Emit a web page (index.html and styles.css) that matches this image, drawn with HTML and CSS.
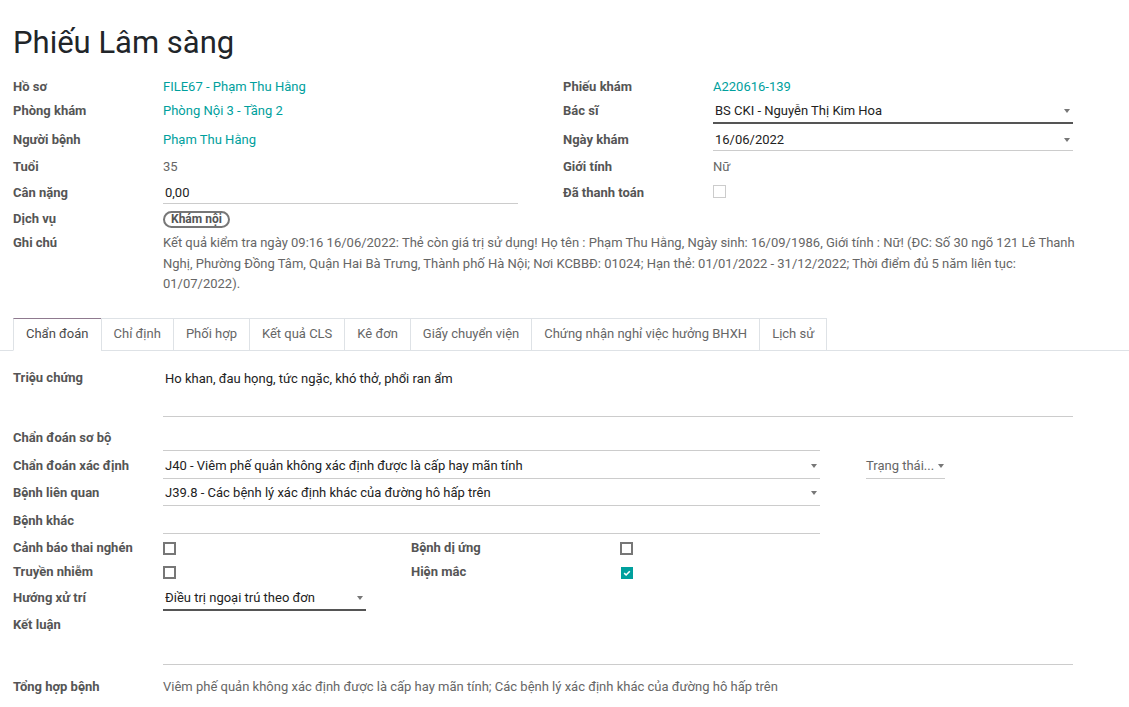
FILE: index.html
```html
<!DOCTYPE html>
<html lang="vi">
<head>
<meta charset="utf-8">
<title>Phiếu Lâm sàng</title>
<link rel="stylesheet" href="styles.css">
</head>
<body>
<div class="sheet">
  <h1 class="title">Phiếu Lâm sàng</h1>
  <div class="head-grid">
    <div class="lbl">Hồ sơ</div>
    <div class="val-l"><a class="link">FILE67 - Phạm Thu Hằng</a></div>
    <div class="lbl">Phiếu khám</div>
    <div class="val-r"><a class="link">A220616-139</a></div>

    <div class="lbl">Phòng khám</div>
    <div class="val-l"><a class="link">Phòng Nội 3 - Tầng 2</a></div>
    <div class="lbl">Bác sĩ</div>
    <div class="val-r"><div class="input focus"><span class="in-text">BS CKI - Nguyễn Thị Kim Hoa</span><span class="caret"></span></div></div>

    <div class="lbl">Người bệnh</div>
    <div class="val-l"><a class="link">Phạm Thu Hằng</a></div>
    <div class="lbl">Ngày khám</div>
    <div class="val-r"><div class="input"><span class="in-text">16/06/2022</span><span class="caret"></span></div></div>

    <div class="lbl">Tuổi</div>
    <div class="val-l plain">35</div>
    <div class="lbl">Giới tính</div>
    <div class="val-r plain">Nữ</div>

    <div class="lbl">Cân nặng</div>
    <div class="val-l"><div class="input"><span class="in-text">0,00</span></div></div>
    <div class="lbl">Đã thanh toán</div>
    <div class="val-r"><span class="cb cb-ro"></span></div>

    <div class="lbl">Dịch vụ</div>
    <div class="val-l"><span class="badge">Khám nội</span></div>
  </div>
  <div class="note-row">
    <div class="lbl">Ghi chú</div>
    <div class="plain note">Kết quả kiểm tra ngày 09:16 16/06/2022: Thẻ còn giá trị sử dụng! Họ tên : Phạm Thu Hằng, Ngày sinh: 16/09/1986, Giới tính : Nữ! (ĐC: Số 30 ngõ 121 Lê Thanh Nghị, Phường Đồng Tâm, Quận Hai Bà Trưng, Thành phố Hà Nội; Nơi KCBBĐ: 01024; Hạn thẻ: 01/01/2022 - 31/12/2022; Thời điểm đủ 5 năm liên tục: 01/07/2022).</div>
  </div>
</div>

<div class="notebook">
  <ul class="tabs">
    <li class="tab active">Chẩn đoán</li>
    <li class="tab">Chỉ định</li>
    <li class="tab">Phối hợp</li>
    <li class="tab">Kết quả CLS</li>
    <li class="tab">Kê đơn</li>
    <li class="tab">Giấy chuyển viện</li>
    <li class="tab">Chứng nhận nghỉ việc hưởng BHXH</li>
    <li class="tab">Lịch sử</li>
  </ul>
  <div class="tab-body">
    <div class="frow frow-area">
      <div class="lbl">Triệu chứng</div>
      <div class="textarea">Ho khan, đau họng, tức ngặc, khó thở, phổi ran ẩm</div>
    </div>
    <div class="frow frow-mid">
      <div class="lbl">Chẩn đoán sơ bộ</div>
      <div class="input input-line"><span class="in-text"></span></div>
    </div>
    <div class="frow frow-mid frow-status">
      <div class="lbl">Chẩn đoán xác định</div>
      <div class="input input-line"><span class="in-text">J40 - Viêm phế quản không xác định được là cấp hay mãn tính</span><span class="caret"></span></div>
      <div class="status"><span class="status-text">Trạng thái...</span><span class="caret caret-sm"></span></div>
    </div>
    <div class="frow frow-mid">
      <div class="lbl">Bệnh liên quan</div>
      <div class="input input-line"><span class="in-text">J39.8 - Các bệnh lý xác định khác của đường hô hấp trên</span><span class="caret"></span></div>
    </div>
    <div class="frow frow-mid">
      <div class="lbl">Bệnh khác</div>
      <div class="input input-line"><span class="in-text"></span></div>
    </div>
    <div class="cb-grid">
      <div class="lbl">Cảnh báo thai nghén</div>
      <div class="cb-cell"><span class="cb"></span></div>
      <div class="lbl">Bệnh dị ứng</div>
      <div class="cb-cell"><span class="cb"></span></div>
      <div class="lbl">Truyền nhiễm</div>
      <div class="cb-cell"><span class="cb"></span></div>
      <div class="lbl">Hiện mắc</div>
      <div class="cb-cell"><span class="cb cb-on"><svg viewBox="0 0 12 12" width="12" height="12"><path d="M3.2 6.2 L5.1 8 L8.8 4.2" fill="none" stroke="#fff" stroke-width="1.6"/></svg></span></div>
    </div>
    <div class="frow frow-short">
      <div class="lbl">Hướng xử trí</div>
      <div class="input focus input-sel"><span class="in-text">Điều trị ngoại trú theo đơn</span><span class="caret"></span></div>
    </div>
    <div class="frow frow-area frow-end">
      <div class="lbl">Kết luận</div>
      <div class="textarea textarea-tall"></div>
    </div>
    <div class="frow">
      <div class="lbl">Tổng hợp bệnh</div>
      <div class="plain">Viêm phế quản không xác định được là cấp hay mãn tính; Các bệnh lý xác định khác của đường hô hấp trên</div>
    </div>
  </div>
</div>
</body>
</html>
```

FILE: styles.css
```css
* { box-sizing: border-box; }
html, body { margin: 0; padding: 0; background: #fff; }
body {
  font-family: Roboto, "Noto Sans", "Liberation Sans", sans-serif;
  font-size: 13px;
  line-height: 20px;
  color: #4c4c4c;
}
.sheet { padding: 0 13px; }
.title {
  margin: 0;
  padding-top: 25px;
  font-size: 31px;
  line-height: 36px;
  font-weight: 400;
  color: #212529;
}
.head-grid {
  display: grid;
  grid-template-columns: 150px 400px 150px 360px;
  grid-template-rows: 24px 29px 27px 26px 26px 24px;
  margin-top: 16px;
}
.lbl { font-weight: 700; color: #555; white-space: nowrap; }
.val-l { padding-right: 45px; }
.link { color: #00a09d; text-decoration: none; }
.plain { color: #666; }

.input {
  display: flex;
  align-items: center;
  min-height: 21px;
  padding: 0 2px;
  border-bottom: 1px solid #ccc;
  color: #222;
}
.input.focus { border-bottom: 2px solid #555; padding-bottom: 1px; }
.in-text { flex: 1; min-width: 0; white-space: nowrap; overflow: hidden; }
.caret {
  width: 0; height: 0;
  border-left: 3.5px solid transparent;
  border-right: 3.5px solid transparent;
  border-top: 4px solid #777;
  margin-left: 6px;
  margin-right: 1px;
}

.cb {
  display: inline-block;
  width: 13px; height: 13px;
  border: 2px solid #777;
  background: #fff;
  vertical-align: top;
  margin-top: 4px;
}
.cb-ro { border: 1px solid #ccc; margin-top: 2px; }
.cb-on {
  width: 12px; height: 12px;
  border: none;
  background: #00a09d;
  margin-left: 1px;
  margin-top: 5px;
}
.cb-on svg { display: block; }

.badge {
  display: inline-block;
  padding: 0 6px;
  border: 2px solid #777;
  border-radius: 10px;
  font-size: 12px;
  font-weight: 700;
  line-height: 13px;
  color: #555;
}

.note-row {
  display: grid;
  grid-template-columns: 150px 916px;
}
.note { line-height: 20.5px; }

.notebook { margin-top: 23.5px; }
.tabs {
  display: flex;
  list-style: none;
  margin: 0;
  padding: 0 0 0 13px;
  border-bottom: 1px solid #dee2e6;
}
.tab {
  padding: 5px 12px 6px;
  border: 1px solid #dee2e6;
  margin-bottom: -1px;
  margin-left: -1px;
  color: #666;
  white-space: nowrap;
}
.tab:first-child { margin-left: 0; }
.tab.active {
  color: #4c4c4c;
  border-top-color: #8f7a8f;
  border-bottom-color: #fff;
}

.tab-body { padding: 17px 13px 0; }
.frow {
  display: grid;
  grid-template-columns: 150px 910px;
  margin-bottom: 4.5px;
}
.frow-mid { grid-template-columns: 150px 657px; margin-bottom: 4.5px; }
.frow-status { grid-template-columns: 150px 657px 125px; }
.frow-status .status { margin-left: 46px; }
.frow-short { grid-template-columns: 150px 203px; margin-bottom: 4px; }
.frow-area { margin-bottom: 11px; }
.frow-end { margin-bottom: 12px; }
.input-line { height: 23px; padding-bottom: 2px; }
.textarea {
  height: 49px;
  padding: 1px 2px 0;
  border-bottom: 1px solid #ccc;
  color: #222;
}
.textarea-tall { height: 50px; }

.status {
  display: flex;
  align-items: center;
  width: 79px;
  height: 23px;
  padding-bottom: 2px;
  border-bottom: 1px solid #ccc;
  color: #666;
  white-space: nowrap;
}
.caret-sm { margin-left: 4px; }

.cb-grid {
  display: grid;
  grid-template-columns: 150px 248px 209px 40px;
  grid-auto-rows: 20px;
  row-gap: 4px;
  margin-top: 1px;
  margin-bottom: 6px;
}
.cb-cell { line-height: 0; }
```
